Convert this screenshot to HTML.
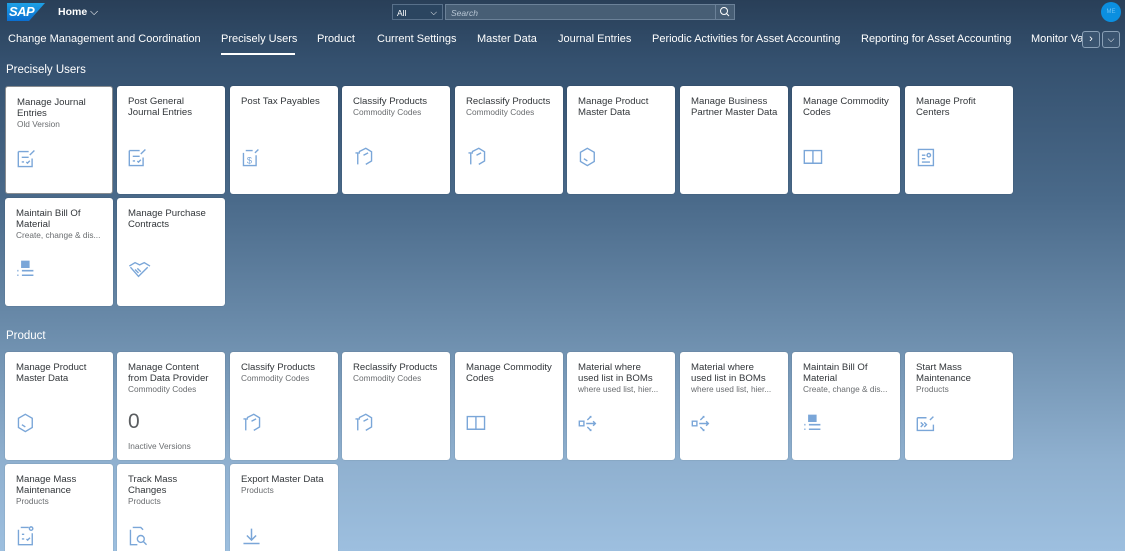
<!DOCTYPE html>
<html style="width:1125px;height:551px;overflow:hidden"><head><meta charset="utf-8"><style>
*{margin:0;padding:0;box-sizing:border-box}
body{width:1125px;height:551px;overflow:hidden;font-family:"Liberation Sans",sans-serif;background:linear-gradient(180deg,#293f58 0px,#34506e 60px,#4a6a8a 200px,#6e8fae 340px,#8fb0cf 460px,#9dbfdf 551px);position:relative}
.a{position:absolute}
.tab{position:absolute;top:33px;color:#fff;font-size:11px;white-space:nowrap}
.sec{position:absolute;left:6px;color:#fff;font-size:11.5px}
.t{position:absolute;width:108px;height:108px;background:#fff;border-radius:3px;box-shadow:0 0 1px rgba(0,0,0,.3)}
.t .h{position:absolute;left:11px;top:10px;width:88px;font-size:9.6px;line-height:11px;color:#32363a}
.t .s{font-size:8.3px;color:#6a6d70;line-height:11px;white-space:nowrap;overflow:hidden}
.t svg{position:absolute;left:10px;top:60px;transform:scale(1.15);transform-origin:0 0}
</style></head><body>
<div class="a" style="left:7px;top:3px;width:38px;height:18px;background:linear-gradient(180deg,#1ea1e6,#0a6ed1);clip-path:polygon(0 0,100% 0,58% 100%,0 100%)"></div>
<div class="a" style="left:9px;top:4px;color:#fff;font-weight:bold;font-size:13px;font-style:italic;letter-spacing:-0.5px">SAP</div>
<div class="a" style="left:58px;top:6px;color:#fff;font-weight:bold;font-size:10.5px">Home <span style="font-weight:normal">⌵</span></div>
<div class="a" style="left:392px;top:4px;width:51px;height:16px;background:#2b4560;border:1px solid #58708a;color:#fff;font-size:8.5px;padding:3px 4px">All <span style="position:absolute;right:5px;top:2px">⌵</span></div>
<div class="a" style="left:445px;top:4px;width:290px;height:16px;background:#475e75;border:1px solid #6b8198;color:#b8c6d4;font-size:8.5px;font-style:italic;padding:3px 5px">Search</div>
<div class="a" style="left:715px;top:4px;width:20px;height:16px;border:1px solid #6b8198;background:#475e75"><svg width="18" height="14"><circle cx="8" cy="6" r="3.5" fill="none" stroke="#fff" stroke-width="1"/><line x1="10.5" y1="8.5" x2="13" y2="11" stroke="#fff"/></svg></div>
<div class="a" style="left:1101px;top:2px;width:20px;height:20px;border-radius:50%;background:#0b8fe0;color:#6dc1f5;font-size:6px;text-align:center;line-height:20px">ME</div>
<div class="tab" style="left:8px">Change Management and Coordination</div>
<div class="tab" style="left:221px">Precisely Users</div>
<div class="a" style="left:221px;top:53px;width:74px;height:2px;background:#fff"></div>
<div class="tab" style="left:317px">Product</div>
<div class="tab" style="left:377px">Current Settings</div>
<div class="tab" style="left:477px">Master Data</div>
<div class="tab" style="left:558px">Journal Entries</div>
<div class="tab" style="left:652px">Periodic Activities for Asset Accounting</div>
<div class="tab" style="left:861px">Reporting for Asset Accounting</div>
<div class="tab" style="left:1031px;width:52px;overflow:hidden">Monitor Value</div>
<div class="a" style="left:1082px;top:31px;width:18px;height:17px;border:1px solid #8aa0b6;border-radius:3px;background:#3a5470;color:#fff;font-size:11px;text-align:center;line-height:15px">›</div>
<div class="a" style="left:1102px;top:31px;width:18px;height:17px;border:1px solid #8aa0b6;border-radius:3px;background:#3a5470;color:#fff;font-size:9px;text-align:center;line-height:15px">⌵</div>

<div class="sec" style="top:64px">Precisely Users</div>
<div class="sec" style="top:330px">Product</div>

<div class="t" style="left:5px;top:86px;border:1px solid #8a8d90;box-shadow:0 0 0 1px #fff inset"><div class="h">Manage Journal Entries<div class="s">Old Version</div></div><svg width="20" height="20"><g fill="none" stroke="#7aa6d8" stroke-width="1.2"><path d="M2 4h9M2 4v13h12v-7"/><path d="M5 9h6M5 13h2M9 13l1 1 2-2M12 7l4-4"/></g></svg></div>
<div class="t" style="left:117px;top:86px"><div class="h">Post General Journal Entries</div><svg width="20" height="20"><g fill="none" stroke="#7aa6d8" stroke-width="1.2"><path d="M2 4h9M2 4v13h12v-7"/><path d="M5 9h6M5 13h2M9 13l1 1 2-2M12 7l4-4"/></g></svg></div>
<div class="t" style="left:230px;top:86px"><div class="h">Post Tax Payables</div><svg width="20" height="20"><g fill="none" stroke="#7aa6d8" stroke-width="1.2"><path d="M5 4h6M3 6v11h11V8M13 6l3-3"/><text x="6" y="15" font-size="8" fill="#7aa6d8" stroke="none">$</text></g></svg></div>
<div class="t" style="left:342px;top:86px"><div class="h">Classify Products<div class="s">Commodity Codes</div></div><svg width="20" height="20"><g fill="none" stroke="#7aa6d8" stroke-width="1.2"><path d="M6 5l6-3 5 3v8l-5 3M3 6h4M5 6v10M10 8l4-2"/></g></svg></div>
<div class="t" style="left:455px;top:86px"><div class="h">Reclassify Products<div class="s">Commodity Codes</div></div><svg width="20" height="20"><g fill="none" stroke="#7aa6d8" stroke-width="1.2"><path d="M6 5l6-3 5 3v8l-5 3M3 6h4M5 6v10M10 8l4-2"/></g></svg></div>
<div class="t" style="left:567px;top:86px"><div class="h">Manage Product Master Data</div><svg width="20" height="20"><g fill="none" stroke="#7aa6d8" stroke-width="1.2"><path d="M9 2l6 3.5v8L9 17l-6-3.5v-8z M6 11l3 2"/></g></svg></div>
<div class="t" style="left:680px;top:86px"><div class="h">Manage Business Partner Master Data</div></div>
<div class="t" style="left:792px;top:86px"><div class="h">Manage Commodity Codes</div><svg width="20" height="20"><g fill="none" stroke="#7aa6d8" stroke-width="1.2"><path d="M2 4h15v11H2zM9.5 4v11"/></g></svg></div>
<div class="t" style="left:905px;top:86px"><div class="h">Manage Profit Centers</div><svg width="20" height="20"><g fill="none" stroke="#7aa6d8" stroke-width="1.2"><path d="M3 3h13v14H3zM6 14h7M6 8h3M6 11h3"/><circle cx="12" cy="8" r="1.5"/></g></svg></div>
<div class="t" style="left:5px;top:198px"><div class="h">Maintain Bill Of Material<div class="s">Create, change &amp; dis...</div></div><svg width="20" height="20"><g fill="none" stroke="#7aa6d8" stroke-width="1.4"><rect x="6" y="3" width="6" height="5" fill="#7aa6d8"/><path d="M2 11h1M6 11h10M2 15h1M6 15h10"/></g></svg></div>
<div class="t" style="left:117px;top:198px"><div class="h">Manage Purchase Contracts</div><svg width="22" height="20"><g fill="none" stroke="#7aa6d8" stroke-width="1.2"><path d="M2 7l5-3 4 2 4-2 5 3M3 8l7 8 8-8M7 10l3 3M9 9l3 3"/></g></svg></div>
<div class="t" style="left:5px;top:352px"><div class="h">Manage Product Master Data</div><svg width="20" height="20"><g fill="none" stroke="#7aa6d8" stroke-width="1.2"><path d="M9 2l6 3.5v8L9 17l-6-3.5v-8z M6 11l3 2"/></g></svg></div>
<div class="t" style="left:117px;top:352px"><div class="h">Manage Content from Data Provider<div class="s">Commodity Codes</div></div><div class="a" style="left:11px;top:58px;font-size:21px;color:#5a5d60">0</div><div class="a" style="left:11px;top:89px;font-size:8.3px;color:#6a6d70">Inactive Versions</div></div>
<div class="t" style="left:230px;top:352px"><div class="h">Classify Products<div class="s">Commodity Codes</div></div><svg width="20" height="20"><g fill="none" stroke="#7aa6d8" stroke-width="1.2"><path d="M6 5l6-3 5 3v8l-5 3M3 6h4M5 6v10M10 8l4-2"/></g></svg></div>
<div class="t" style="left:342px;top:352px"><div class="h">Reclassify Products<div class="s">Commodity Codes</div></div><svg width="20" height="20"><g fill="none" stroke="#7aa6d8" stroke-width="1.2"><path d="M6 5l6-3 5 3v8l-5 3M3 6h4M5 6v10M10 8l4-2"/></g></svg></div>
<div class="t" style="left:455px;top:352px"><div class="h">Manage Commodity Codes</div><svg width="20" height="20"><g fill="none" stroke="#7aa6d8" stroke-width="1.2"><path d="M2 4h15v11H2zM9.5 4v11"/></g></svg></div>
<div class="t" style="left:567px;top:352px"><div class="h">Material where<br>used list in BOMs<div class="s">where used list, hier...</div></div><svg width="20" height="20"><g fill="none" stroke="#7aa6d8" stroke-width="1.2"><rect x="2" y="8" width="4" height="4"/><path d="M8 10h8M14 8l2 2-2 2M9 7l3-3M11 4h1v1M9 13l3 3M11 16h1v-1"/></g></svg></div>
<div class="t" style="left:680px;top:352px"><div class="h">Material where<br>used list in BOMs<div class="s">where used list, hier...</div></div><svg width="20" height="20"><g fill="none" stroke="#7aa6d8" stroke-width="1.2"><rect x="2" y="8" width="4" height="4"/><path d="M8 10h8M14 8l2 2-2 2M9 7l3-3M11 4h1v1M9 13l3 3M11 16h1v-1"/></g></svg></div>
<div class="t" style="left:792px;top:352px"><div class="h">Maintain Bill Of Material<div class="s">Create, change &amp; dis...</div></div><svg width="20" height="20"><g fill="none" stroke="#7aa6d8" stroke-width="1.4"><rect x="6" y="3" width="6" height="5" fill="#7aa6d8"/><path d="M2 11h1M6 11h10M2 15h1M6 15h10"/></g></svg></div>
<div class="t" style="left:905px;top:352px"><div class="h">Start Mass Maintenance<div class="s">Products</div></div><svg width="20" height="20"><g fill="none" stroke="#7aa6d8" stroke-width="1.2"><path d="M2 5v11h14v-5M2 5h8M5 9l2 2-2 2M8 9l2 2-2 2M13 7l3-3"/></g></svg></div>
<div class="t" style="left:5px;top:464px"><div class="h">Manage Mass Maintenance<div class="s">Products</div></div><svg width="20" height="20"><g fill="none" stroke="#7aa6d8" stroke-width="1.2"><path d="M5 3h7M3 5v13h12V8M6 9h2M6 13h2M10 13l1 1 2-2"/><circle cx="14" cy="4" r="1.5"/></g></svg></div>
<div class="t" style="left:117px;top:464px"><div class="h">Track Mass<br>Changes<div class="s">Products</div></div><svg width="20" height="20"><g fill="none" stroke="#7aa6d8" stroke-width="1.2"><path d="M5 3h7l2 2M3 5v13h6"/><circle cx="12" cy="13" r="3"/><path d="M14 15l3 3"/></g></svg></div>
<div class="t" style="left:230px;top:464px"><div class="h">Export Master Data<div class="s">Products</div></div><svg width="20" height="20"><g fill="none" stroke="#7aa6d8" stroke-width="1.3"><path d="M10 4v10M6 10l4 4 4-4M3 17h14"/></g></svg></div>
</body></html>
